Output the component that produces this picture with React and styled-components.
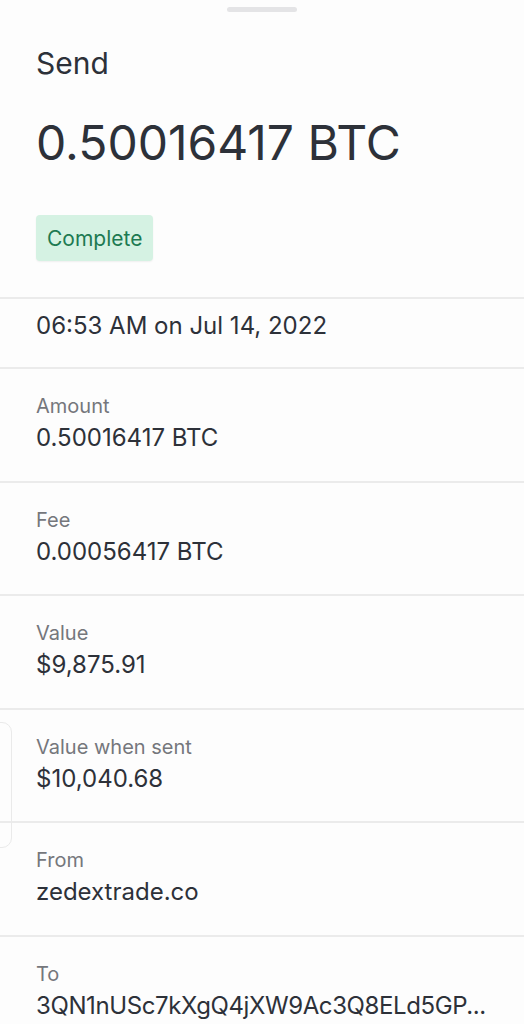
import React from "react";
import styled, { createGlobalStyle } from "styled-components";

const GlobalStyle = createGlobalStyle`
  html, body {
    margin: 0;
    padding: 0;
    background: #fdfdfd;
  }
  body {
    font-family: Inter, "Noto Sans", "Liberation Sans", sans-serif;
    color: #2d3139;
  }
`;

const Sheet = styled.div`
  position: relative;
  width: 524px;
  height: 1024px;
  background: #fdfdfd;
  overflow: hidden;
`;

const Handle = styled.div`
  width: 70px;
  height: 5px;
  border-radius: 3px;
  background: #e4e4e6;
  margin: 7px auto 0;
`;

const Header = styled.header`
  padding: 33px 36px 36px;
  display: flex;
  flex-direction: column;
  align-items: flex-start;
`;

const Kind = styled.h2`
  margin: 0;
  font-size: 30px;
  font-weight: 400;
  line-height: 36px;
  color: #2d3139;
`;

const Amount = styled.h1`
  margin: 33px 0 0;
  font-size: 48px;
  font-weight: 400;
  line-height: 58px;
  color: #2d3139;
`;

const Badge = styled.span`
  margin-top: 43px;
  height: 46px;
  padding: 0 11px;
  display: inline-flex;
  align-items: center;
  border-radius: 4px;
  background: #d5f2e3;
  color: #1d7a52;
  font-size: 21px;
  box-shadow: 0 1px 2px rgba(0, 0, 0, 0.06);
`;

const Row = styled.section`
  border-top: 2px solid #ebebeb;
  padding: ${({ $compact }) => ($compact ? "12px 36px 26px" : "25px 36px 27.5px")};
`;

const Label = styled.div`
  font-size: 20px;
  line-height: 24px;
  color: #75777c;
`;

const Value = styled.div`
  margin-top: ${({ $compact }) => ($compact ? "0" : "5px")};
  font-size: 24px;
  line-height: 30px;
  letter-spacing: ${({ $tight }) => ($tight ? "-0.4px" : "0")};
  color: #2d3139;
  white-space: nowrap;
`;

const Ghost = styled.div`
  position: absolute;
  left: -14px;
  top: 722px;
  width: 24px;
  height: 124px;
  border: 1.5px solid #eaeaea;
  border-radius: 10px;
  pointer-events: none;
`;

const rows = [
  { label: "Amount", value: "0.50016417 BTC" },
  { label: "Fee", value: "0.00056417 BTC" },
  { label: "Value", value: "$9,875.91" },
  { label: "Value when sent", value: "$10,040.68" },
  { label: "From", value: "zedextrade.co" },
  { label: "To", value: "3QN1nUSc7kXgQ4jXW9Ac3Q8ELd5GP...", tight: true },
];

export default function App() {
  return (
    <>
      <GlobalStyle />
      <Sheet>
        <Handle />
        <Header>
          <Kind>Send</Kind>
          <Amount>0.50016417 BTC</Amount>
          <Badge>Complete</Badge>
        </Header>
        <Row $compact>
          <Value $compact>06:53 AM on Jul 14, 2022</Value>
        </Row>
        {rows.map((r) => (
          <Row key={r.label}>
            <Label>{r.label}</Label>
            <Value $tight={r.tight}>{r.value}</Value>
          </Row>
        ))}
        <Ghost />
      </Sheet>
    </>
  );
}
